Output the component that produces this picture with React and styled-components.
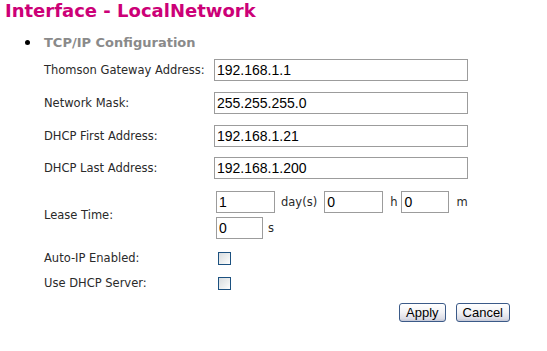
import React from "react";
import styled, { createGlobalStyle } from "styled-components";

const GlobalStyle = createGlobalStyle`
  html, body { margin: 0; padding: 0; background: #ffffff; }
  body { font-family: "DejaVu Sans", Verdana, sans-serif; }
`;

const Page = styled.div`
  width: 547px;
  height: 351px;
  overflow: hidden;
`;

const Title = styled.h1`
  margin: 0;
  padding-left: 5px;
  font-family: "DejaVu Sans", Verdana, sans-serif;
  font-weight: bold;
  font-size: 18px;
  line-height: 21px;
  color: #cc0077;
`;

const SectionHeading = styled.div`
  display: flex;
  align-items: center;
  gap: 14px;
  margin-top: 14px;
  padding-left: 25px;
  height: 15px;
  font-size: 13px;
  font-weight: bold;
  line-height: 15px;
  color: #8a8a8a;
`;

const Bullet = styled.span`
  width: 5px;
  height: 5px;
  border-radius: 50%;
  background: #000;
`;

const Form = styled.div`
  display: flex;
  flex-direction: column;
  padding-left: 44px;
`;

const Row = styled.div`
  display: grid;
  grid-template-columns: 170px 1fr;
  align-items: center;
  height: ${(p) => p.$h}px;
  margin-top: ${(p) => p.$mt}px;
`;

const Label = styled.label`
  font-size: 11.5px;
  line-height: 13px;
  color: #2a2a2a;
  white-space: nowrap;
`;

const TextInput = styled.input`
  box-sizing: border-box;
  width: ${(p) => p.$w}px;
  height: 22px;
  margin: 0;
  margin-left: ${(p) => p.$ml || 0}px;
  padding: 0 2px;
  border: 1px solid #9c9c9c;
  background: #fff;
  font-family: "Liberation Sans", Arial, sans-serif;
  font-size: 14px;
  color: #000;
  outline: none;
`;

const LeaseCell = styled.div`
  display: flex;
  flex-direction: column;
  gap: 4px;
  padding-left: 2px;
`;

const LeaseLine = styled.div`
  display: flex;
  align-items: center;
`;

const Unit = styled.span`
  margin-left: ${(p) => p.$ml}px;
  font-size: 11.5px;
  color: #2a2a2a;
`;

const Check = styled.input`
  appearance: none;
  -webkit-appearance: none;
  box-sizing: border-box;
  width: 13px;
  height: 13px;
  margin: 0 0 0 4px;
  border: 1px solid #1c5180;
  background: linear-gradient(135deg, #d8dcdf 0%, #eef0f0 60%, #ffffff 100%);
`;

const Actions = styled.div`
  display: flex;
  justify-content: flex-end;
  gap: 10px;
  margin-top: 13px;
  padding-right: 37px;
`;

const Button = styled.button`
  box-sizing: border-box;
  height: 19px;
  padding: 0 6px;
  border: 1px solid #3b5a88;
  border-radius: 3px;
  background: linear-gradient(#ffffff 0%, #f2f2f5 50%, #dcdde6 85%, #c4c7d6 100%);
  font-family: "Liberation Sans", Arial, sans-serif;
  font-size: 13px;
  line-height: 17px;
  color: #000;
`;

const fields = [
  { label: "Thomson Gateway Address:", value: "192.168.1.1", mt: 9 },
  { label: "Network Mask:", value: "255.255.255.0", mt: 11 },
  { label: "DHCP First Address:", value: "192.168.1.21", mt: 11 },
  { label: "DHCP Last Address:", value: "192.168.1.200", mt: 10 },
];

export default function App() {
  return (
    <Page>
      <GlobalStyle />
      <Title>Interface - LocalNetwork</Title>
      <SectionHeading>
        <Bullet />
        TCP/IP Configuration
      </SectionHeading>
      <Form>
        {fields.map((f) => (
          <Row key={f.label} $h={22} $mt={f.mt}>
            <Label>{f.label}</Label>
            <TextInput $w={254} defaultValue={f.value} />
          </Row>
        ))}
        <Row $h={48} $mt={12}>
          <Label>Lease Time:</Label>
          <LeaseCell>
            <LeaseLine>
              <TextInput $w={59} defaultValue="1" />
              <Unit $ml={6}>day(s)</Unit>
              <TextInput $w={59} $ml={7} defaultValue="0" />
              <Unit $ml={7}>h</Unit>
              <TextInput $w={48} $ml={4} defaultValue="0" />
              <Unit $ml={7}>m</Unit>
            </LeaseLine>
            <LeaseLine>
              <TextInput $w={47} defaultValue="0" />
              <Unit $ml={5}>s</Unit>
            </LeaseLine>
          </LeaseCell>
        </Row>
        <Row $h={13} $mt={13}>
          <Label>Auto-IP Enabled:</Label>
          <Check type="checkbox" />
        </Row>
        <Row $h={13} $mt={12}>
          <Label>Use DHCP Server:</Label>
          <Check type="checkbox" />
        </Row>
      </Form>
      <Actions>
        <Button>Apply</Button>
        <Button>Cancel</Button>
      </Actions>
    </Page>
  );
}
